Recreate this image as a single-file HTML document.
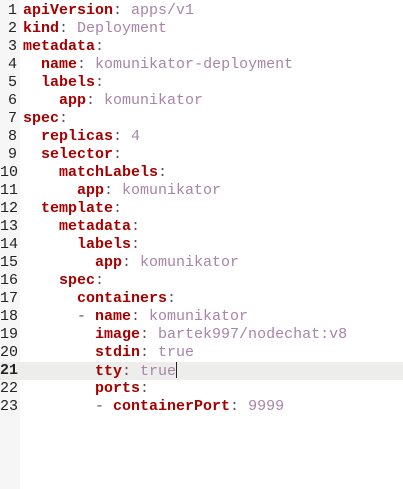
<html><head><style>
body{margin:0;width:403px;height:489px;background:#fff;overflow:hidden;position:relative;font-family:"Liberation Mono",monospace;font-size:15px}
#g{position:absolute;left:0;top:0;width:20px;height:489px;background:#f6f6f6}
.l{position:absolute;left:0;height:18px;line-height:18px;width:403px;white-space:pre}
.n{position:absolute;left:0;width:17px;text-align:right;color:#222}
.t{position:absolute;left:23px;color:#555}
.k{color:#a40000;font-weight:bold}
.v{color:#a784a8}
.hl{background:#ededeb}
.hl .n{font-weight:bold}
.c{display:inline-block;width:1px;height:16px;background:#222;vertical-align:-3px}
</style></head><body><div id="g"></div>
<div class="l" style="top:2px"><span class="n">1</span><span class="t"><span class="k">apiVersion</span>: <span class="v">apps/v1</span></span></div>
<div class="l" style="top:20px"><span class="n">2</span><span class="t"><span class="k">kind</span>: <span class="v">Deployment</span></span></div>
<div class="l" style="top:38px"><span class="n">3</span><span class="t"><span class="k">metadata</span>:</span></div>
<div class="l" style="top:56px"><span class="n">4</span><span class="t">  <span class="k">name</span>: <span class="v">komunikator-deployment</span></span></div>
<div class="l" style="top:74px"><span class="n">5</span><span class="t">  <span class="k">labels</span>:</span></div>
<div class="l" style="top:92px"><span class="n">6</span><span class="t">    <span class="k">app</span>: <span class="v">komunikator</span></span></div>
<div class="l" style="top:110px"><span class="n">7</span><span class="t"><span class="k">spec</span>:</span></div>
<div class="l" style="top:128px"><span class="n">8</span><span class="t">  <span class="k">replicas</span>: <span class="v">4</span></span></div>
<div class="l" style="top:146px"><span class="n">9</span><span class="t">  <span class="k">selector</span>:</span></div>
<div class="l" style="top:164px"><span class="n">10</span><span class="t">    <span class="k">matchLabels</span>:</span></div>
<div class="l" style="top:182px"><span class="n">11</span><span class="t">      <span class="k">app</span>: <span class="v">komunikator</span></span></div>
<div class="l" style="top:200px"><span class="n">12</span><span class="t">  <span class="k">template</span>:</span></div>
<div class="l" style="top:218px"><span class="n">13</span><span class="t">    <span class="k">metadata</span>:</span></div>
<div class="l" style="top:236px"><span class="n">14</span><span class="t">      <span class="k">labels</span>:</span></div>
<div class="l" style="top:254px"><span class="n">15</span><span class="t">        <span class="k">app</span>: <span class="v">komunikator</span></span></div>
<div class="l" style="top:272px"><span class="n">16</span><span class="t">    <span class="k">spec</span>:</span></div>
<div class="l" style="top:290px"><span class="n">17</span><span class="t">      <span class="k">containers</span>:</span></div>
<div class="l" style="top:308px"><span class="n">18</span><span class="t">      - <span class="k">name</span>: <span class="v">komunikator</span></span></div>
<div class="l" style="top:326px"><span class="n">19</span><span class="t">        <span class="k">image</span>: <span class="v">bartek997/nodechat:v8</span></span></div>
<div class="l" style="top:344px"><span class="n">20</span><span class="t">        <span class="k">stdin</span>: <span class="v">true</span></span></div>
<div class="l hl" style="top:362px"><span class="n">21</span><span class="t">        <span class="k">tty</span>: <span class="v">true</span><span class="c"></span></span></div>
<div class="l" style="top:380px"><span class="n">22</span><span class="t">        <span class="k">ports</span>:</span></div>
<div class="l" style="top:398px"><span class="n">23</span><span class="t">        - <span class="k">containerPort</span>: <span class="v">9999</span></span></div>
</body></html>
